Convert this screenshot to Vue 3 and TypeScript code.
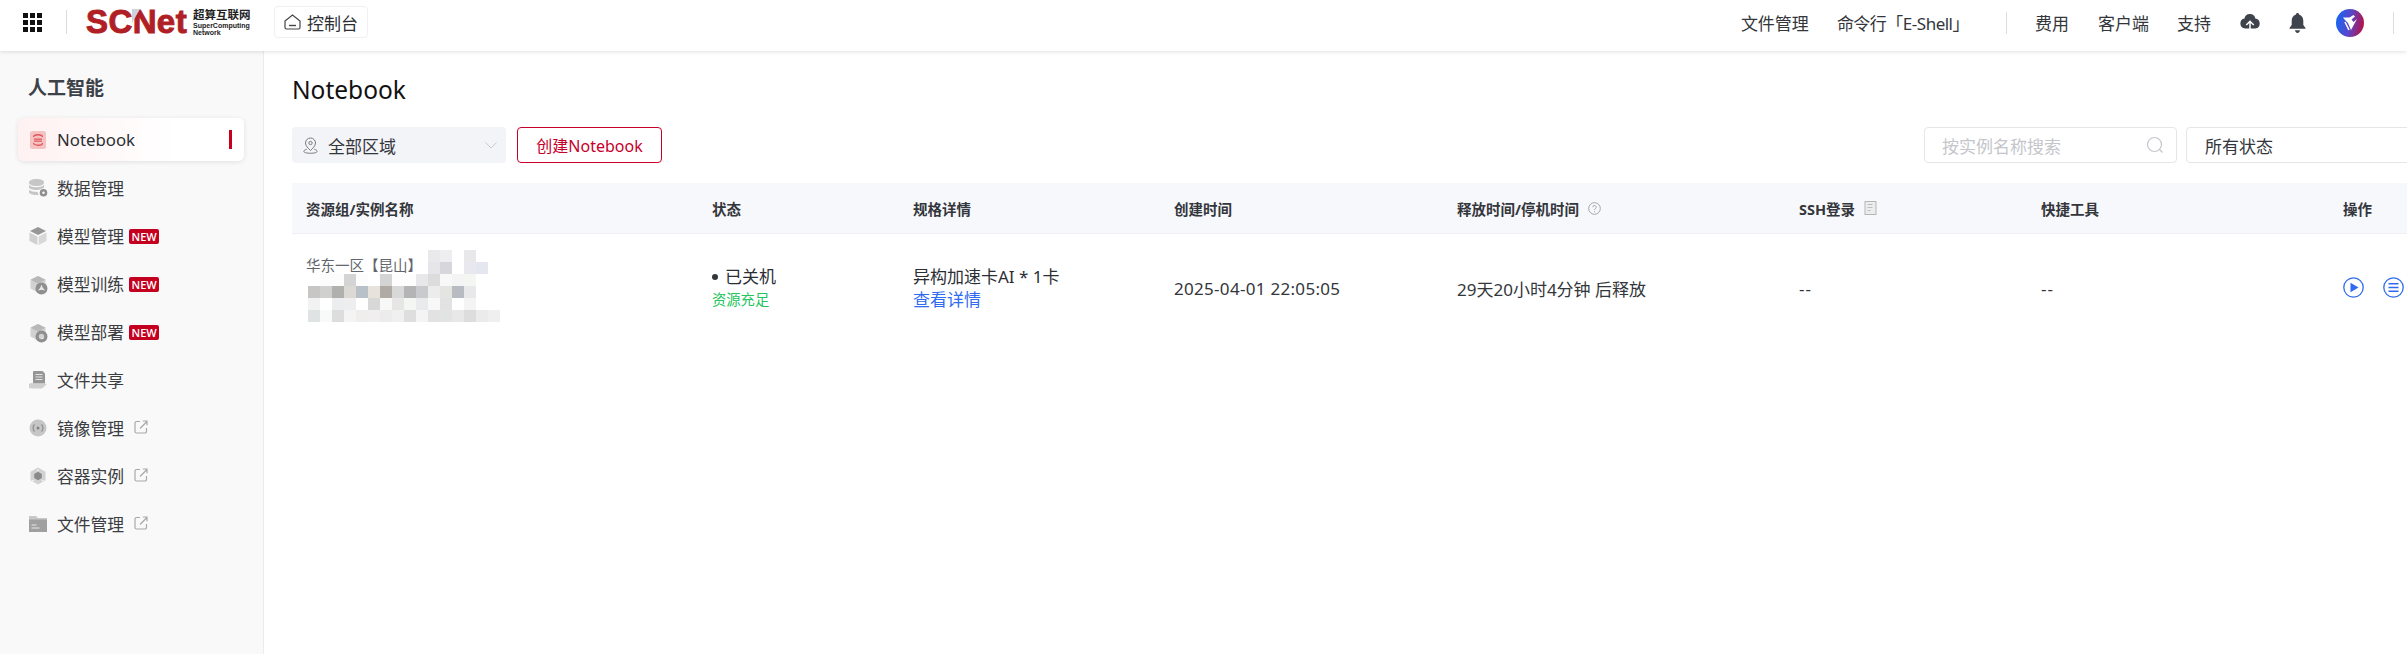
<script setup lang="ts">
interface Shape { d: string; fill?: string; stroke?: string; sw?: number }
interface NavItem { label: string; icon: Shape[]; badge?: boolean; link?: boolean }

const g1 = '#c6c6c6'
const cubeOutline: Shape[] = [
  { d: 'M9 1l7.500 3.800v8.600L9 17.500l-7.500-4V4.800z', fill: '#d2d2d2' },
  { d: 'M1.500 4.800L9 8.500l7.500-3.700L9 1z', fill: '#b8b8b8' },
]
const navItems: NavItem[] = [
  { label: '数据管理', icon: [
    { d: 'M0 3.500C0 1.500 3 0 7.500 0S15 1.500 15 3.500 12 7 7.500 7 0 5.500 0 3.500z', fill: g1 },
    { d: 'M0 5.800C1.500 7.600 4.500 8.300 7.500 8.300S13.500 7.600 15 5.800V8.800c-1 .6-2.500 1-3.700 1.400C9.500 11 8.300 11 7.500 11 3.500 11 0 9.800 0 8.500z', fill: g1 },
    { d: 'M0 10.800C1.500 12.300 4.500 13 8.800 13c.1 1.200.4 2 1 3H7.500C3.500 16 0 14.800 0 13z', fill: g1 },
    { d: 'M14.500 10a3.800 3.800 0 1 0 0 7.600 3.800 3.800 0 0 0 0-7.600zm0 2.500a1.300 1.300 0 1 1 0 2.600 1.300 1.300 0 0 1 0-2.600z', fill: '#8f8f8f' },
  ] },
  { label: '模型管理', badge: true, icon: [
    { d: 'M9 0l8 4-8 4-8-4z', fill: '#979797' },
    { d: 'M.5 5.500l7.900 4V18L.5 14z', fill: '#d0d0d0' },
    { d: 'M17.500 5.500l-7.900 4V18l7.900-4z', fill: '#d8d8d8' },
  ] },
  { label: '模型训练', badge: true, icon: [
    ...cubeOutline,
    { d: 'M12.500 7.500a6 6 0 1 0 0 12 6 6 0 0 0 0-12z', fill: '#8f8f8f' },
    { d: 'M12.500 9.500l1.100 3 2.400 3-3.500-.7-3.500.7 2.400-3z', fill: '#e9e9e9' },
  ] },
  { label: '模型部署', badge: true, icon: [
    ...cubeOutline,
    { d: 'M12.500 7.500a6 6 0 1 0 0 12 6 6 0 0 0 0-12zm0 3.300a2.700 2.700 0 1 1 0 5.400 2.700 2.700 0 0 1 0-5.400z', fill: '#8f8f8f' },
  ] },
  { label: '文件共享', icon: [
    { d: 'M5 0h8.500L16 2.500V12.500H4V1a1 1 0 0 1 1-1z', fill: '#969696' },
    { d: 'M6.500 3.500h7M6.500 6h7M6.500 8.500h7', stroke: '#e3e3e3', sw: 1 },
    { d: 'M0 13c2-1.500 4-1 5.500 0h6.500l4.500-.5c1 0 1.500.8.500 1.500L13 17.500H3.500L0 17z', fill: '#d0d0d0' },
  ] },
  { label: '镜像管理', link: true, icon: [
    { d: 'M9 .500a8.500 8.500 0 1 0 0 17 8.500 8.500 0 0 0 0-17z', fill: '#c6c6c6' },
    { d: 'M5.500 5.500a5 5 0 0 0 0 7M12.500 5.500a5 5 0 0 1 0 7', stroke: '#8f8f8f', sw: 1.200 },
    { d: 'M9 7.500a1.500 1.500 0 1 0 0 3 1.500 1.500 0 0 0 0-3z', fill: '#828282' },
  ] },
  { label: '容器实例', link: true, icon: [
    { d: 'M9 .500l7.500 4.200v8.600L9 17.500l-7.500-4.200V4.700z', fill: '#d2d2d2' },
    { d: 'M9 4.800l3.800 2.200v4L9 13.200 5.200 11V7z', fill: '#8a8a8a' },
    { d: 'M9 2.500v1.500M3.500 14l1.300-1M14.500 14l-1.300-1', stroke: '#f8f8f8', sw: 1.400 },
  ] },
  { label: '文件管理', link: true, icon: [
    { d: 'M0 1h7l2 2h9v2H0z', fill: '#c8c8c8' },
    { d: 'M0 4.500h18V17H0z', fill: '#a0a0a0' },
    { d: 'M2.500 10h5M2.500 13h8', stroke: '#e8e8e8', sw: 1.200 },
  ] },
]

const columns = [
  { label: '资源组/实例名称', width: 406 },
  { label: '状态', width: 201 },
  { label: '规格详情', width: 261 },
  { label: '创建时间', width: 283 },
  { label: '释放时间/停机时间', width: 342, help: true },
  { label: 'SSH登录', width: 242, doc: true },
  { label: '快捷工具', width: 302 },
  { label: '操作', width: 100 },
]
const gridColumns = columns.map((c) => `${c.width}px`).join(' ')

const t = 'transparent'
const redaction: string[][] = [
  [t, t, t, t, t, t, t, t, t, t, '#e9e9eb', '#eeeef0', t, '#e8e8ea', t, t],
  [t, t, t, t, t, t, t, t, t, t, '#e6e6ea', '#d6d6dc', t, '#e8e8ee', '#e4e6f0', t],
  [t, '#fcfcfc', '#fcfcfc', '#d4d4d4', '#fcfcfc', t, '#d4d4d4', '#fcfdfc', '#fcfdfc', '#e8e8ea', '#dcdcdc', '#f8f8f8', '#f4f4f4', '#f4f6f4', t, t],
  ['#c8c6c4', '#d0d0ce', '#b0b0ae', '#dcd8d4', '#b8c0c8', '#e8e2dc', '#b0aaa4', '#d8d8d8', '#b4b4b6', '#c8cace', '#ececec', '#e4e4e0', '#b8bcc2', '#e8e8ea', t, t],
  ['#f2f2f2', '#ffffff', '#ecedef', '#eeeeee', '#ffffff', '#d8d8d8', '#f8f8f6', '#e6e6e6', '#f4f6f4', '#e8eaec', '#f8f8f8', '#e2e2e2', '#ffffff', '#f4f4f4', t, t],
  ['#dfe3e3', '#f8fafa', '#dddddd', '#f4f4f4', '#f0eeec', '#f0eeee', '#ececec', '#f0f0f0', '#dedede', '#f4f4f4', '#e2e2e2', '#e2e4e4', '#e8e8e8', '#dddddd', '#ebebeb', '#efefef'],
]
const redactionCells = redaction.flat()
</script>

<template>
  <div class="page">
    <header class="topbar">
      <div class="top-left">
        <div class="apps"><i v-for="n in 9" :key="n"></i></div>
        <span class="vline"></span>
        <div class="logo">
          <span class="logo-mark">SCNet<i class="fold"></i></span>
          <span class="logo-side">
            <b class="logo-cn">超算互联网</b>
            <b class="logo-en">SuperComputing<br />Network</b>
          </span>
        </div>
        <div class="console">
          <svg width="17" height="16" viewBox="0 0 17 16" fill="none" stroke="#444" stroke-width="1.200">
            <path d="M1 7l7.500-6L16 7v6.500a1.500 1.500 0 0 1-1.500 1.500h-12A1.500 1.500 0 0 1 1 13.500z" />
            <path d="M5 11.500h7" stroke-width="1.400" />
          </svg>
          <span>控制台</span>
        </div>
      </div>
      <nav class="top-right">
        <a class="t1">文件管理</a>
        <a class="t2">命令行「E-Shell」</a>
        <span class="vline v2"></span>
        <a class="t3">费用</a>
        <a class="t4">客户端</a>
        <a class="t5">支持</a>
        <svg class="cloud" width="20" height="18" viewBox="0 0 20 18">
          <path d="M10 0a5.500 5.500 0 0 1 5.300 4.600A5 5 0 0 1 15.500 14.500H5A5 5 0 0 1 4.500 4.600 5.500 5.500 0 0 1 10 0z" fill="#3f434b" />
          <path d="M10 17V8M6.300 11L10 7.300 13.700 11" fill="none" stroke="#fff" stroke-width="1.500" />
        </svg>
        <svg class="bell" width="17" height="20" viewBox="0 0 17 20">
          <path d="M8.500 0c1 0 1.500.7 1.500 1.500C13 2.300 14.300 5 14.300 8v4l2.200 3v.8H.5V15l2.200-3V8C2.700 5 4 2.300 7 1.500 7 .7 7.500 0 8.500 0z" fill="#3f434b" />
          <path d="M6 17.200h5C10.700 19 9.700 20 8.500 20S6.300 19 6 17.200z" fill="#3f434b" />
        </svg>
        <span class="avatar">
          <svg width="28" height="28" viewBox="0 0 28 28">
            <path d="M7 8.500h6.500l4-2.500 1.500 1.500-3.500 3 2 2.500 3.500-3-6 11-3-7L9 11z" fill="#fff" />
            <path d="M9 13l4 8" stroke="#fff" stroke-width="1.600" fill="none" />
          </svg>
        </span>
        <span class="vline v3"></span>
      </nav>
    </header>

    <div class="body">
      <aside class="sidebar">
        <h2 class="side-title">人工智能</h2>
        <div class="nav-item active">
          <svg class="nav-icon" width="18" height="18" viewBox="0 0 18 18">
            <rect x="1" y="0" width="16" height="18" rx="2.500" fill="#f5c2c2" />
            <path d="M4.500 6C5 3 13 3 13.500 6M4.500 12c.5 3 9 3 9 0M5 8.200h8M5 10.200h8" fill="none" stroke="#e0565c" stroke-width="1.300" />
          </svg>
          <span>Notebook</span>
          <i class="active-bar"></i>
        </div>
        <div v-for="item in navItems" :key="item.label" class="nav-item">
          <svg class="nav-icon" width="18" height="18" viewBox="0 0 18 18">
            <path
              v-for="(s, i) in item.icon"
              :key="i"
              :d="s.d"
              :fill="s.fill ?? 'none'"
              :stroke="s.stroke ?? 'none'"
              :stroke-width="s.sw ?? 0"
            />
          </svg>
          <span>{{ item.label }}</span>
          <em v-if="item.badge" class="badge">NEW</em>
          <svg v-if="item.link" class="ext" width="14" height="14" viewBox="0 0 14 14" fill="none" stroke="#a8a8a8" stroke-width="1.200">
            <path d="M6 1.500H2.500a1.500 1.500 0 0 0-1.500 1.500v8.500A1.500 1.500 0 0 0 2.500 13H11a1.500 1.500 0 0 0 1.500-1.500V8" />
            <path d="M6 8.500L13 1.500M8.800 1H13v4.200" />
          </svg>
        </div>
      </aside>

      <main class="main">
        <h1 class="title">Notebook</h1>
        <div class="filters">
          <div class="region">
            <svg width="15" height="17" viewBox="0 0 18 20" fill="none" stroke="#777b82" stroke-width="1.200">
              <path d="M9 1a6 6 0 0 1 6 6c0 3.500-3.500 6.500-6 9-2.500-2.500-6-5.500-6-9a6 6 0 0 1 6-6z" />
              <circle cx="9" cy="7" r="2" />
              <path d="M4.500 14.500C2.500 15 1 16 1 17c0 1.500 3.500 2.300 8 2.300s8-.8 8-2.300c0-1-1.500-2-3.500-2.500" />
            </svg>
            <span>全部区域</span>
            <svg class="chev" width="12" height="7" viewBox="0 0 12 7" fill="none" stroke="#c6cad1" stroke-width="1">
              <path d="M.5 .5L6 6l5.500-5.500" />
            </svg>
          </div>
          <button class="create" type="button">创建Notebook</button>
          <div class="spacer"></div>
          <div class="search">
            <span>按实例名称搜索</span>
            <svg width="18" height="18" viewBox="0 0 18 18" fill="none" stroke="#c4c6cb" stroke-width="1.200">
              <circle cx="8.500" cy="8.500" r="7" />
              <path d="M13.500 13.500L16.500 16.500" />
            </svg>
          </div>
          <div class="status-select">所有状态</div>
        </div>

        <div class="table">
          <div class="thead" :style="{ gridTemplateColumns: gridColumns }">
            <div v-for="c in columns" :key="c.label" class="th">
              <span>{{ c.label }}</span>
              <svg v-if="c.help" width="13" height="13" viewBox="0 0 13 13" fill="none" stroke="#a5a5a5">
                <circle cx="6.500" cy="6.500" r="5.800" />
                <path d="M4.800 5.200a1.700 1.700 0 1 1 2.500 1.500c-.6.300-.8.600-.8 1.300M6.500 9.200v1" />
              </svg>
              <svg v-if="c.doc" width="13" height="14" viewBox="0 0 13 14">
                <rect x="1" y="0.500" width="11" height="13" fill="#ededed" stroke="#b5b5b5" />
                <path d="M3.500 3.500h5M3.500 6.500h5M3.500 9.500h3" stroke="#bdbdbd" fill="none" />
              </svg>
            </div>
          </div>
          <div class="trow" :style="{ gridTemplateColumns: gridColumns }">
            <div class="td name-cell">
              <span class="zone">华东一区【昆山】</span>
              <div class="redact">
                <i v-for="(c, i) in redactionCells" :key="i" :style="{ background: c }"></i>
              </div>
            </div>
            <div class="td stack">
              <span class="state"><i class="dot"></i>已关机</span>
              <span class="avail">资源充足</span>
            </div>
            <div class="td stack">
              <span class="state">异构加速卡AI * 1卡</span>
              <a class="detail">查看详情</a>
            </div>
            <div class="td date">2025-04-01 22:05:05</div>
            <div class="td">29天20小时4分钟 后释放</div>
            <div class="td dash">--</div>
            <div class="td dash">--</div>
            <div class="td actions">
              <svg width="21" height="21" viewBox="0 0 21 21" fill="none" stroke="#2f6bf0" stroke-width="1.300">
                <circle cx="10.500" cy="10.500" r="9.700" />
                <path d="M7.500 5.800l8 4.700-8 4.700z" fill="#2f6bf0" stroke="none" />
              </svg>
              <svg width="21" height="21" viewBox="0 0 21 21" fill="none" stroke="#2f6bf0" stroke-width="1.300">
                <circle cx="10.500" cy="10.500" r="9.700" />
                <path d="M5.500 6.700h10M5.500 10.500h10M5.500 14.300h10" stroke-width="1.600" />
              </svg>
            </div>
          </div>
        </div>
      </main>
    </div>
  </div>
</template>

<style>
html, body { margin: 0; background: #fff; overflow: hidden; }
</style>

<style scoped>
.page {
  width: 2407px;
  height: 654px;
  overflow: hidden;
  display: flex;
  flex-direction: column;
  font-family: "Noto Sans", "Noto Sans CJK SC", sans-serif;
  color: #2b2e33;
  font-size: 16px;
}
.topbar {
  height: 51px;
  flex: none;
  display: flex;
  justify-content: space-between;
  align-items: center;
  background: #fff;
  box-shadow: 0 1px 4px rgba(0, 0, 0, .12);
  position: relative;
  z-index: 2;
}
.top-left, .top-right { display: flex; align-items: center; }
.top-left { padding-left: 23px; padding-bottom: 7px; }
.apps {
  display: grid;
  grid-template-columns: repeat(3, 5px);
  grid-auto-rows: 5px;
  gap: 2px;
}
.apps i { background: #111; }
.vline { width: 1px; height: 24px; background: #dcdcdc; display: block; }
.top-left .vline { margin-left: 24px; }
.logo { display: flex; align-items: center; margin-left: 19px; width: 188px; }
.logo-mark {
  position: relative;
  font-family: "Liberation Sans", sans-serif;
  font-weight: 700;
  font-size: 33px;
  line-height: 30px;
  letter-spacing: .4px;
  color: #b01f26;
  -webkit-text-stroke: 1px #b01f26;
}
.fold {
  position: absolute;
  left: 46px;
  top: 2px;
  width: 0;
  height: 0;
  border-left: 8px solid #cfd2da;
  border-bottom: 14px solid transparent;
}
.logo-side { display: flex; flex-direction: column; margin-left: 6px; color: #222; }
.logo-cn { font-size: 11.500px; line-height: 14px; font-weight: 700; white-space: nowrap; }
.logo-en { font-size: 7px; line-height: 7px; font-family: "Liberation Sans", sans-serif; white-space: nowrap; }
.console {
  width: 94px;
  height: 32px;
  box-sizing: border-box;
  border: 1px solid #eef0f2;
  border-radius: 4px;
  display: flex;
  align-items: center;
  justify-content: center;
  gap: 6px;
  font-size: 17px;
  color: #2b2e33;
}
.top-right { font-size: 17px; color: #33363b; padding-right: 13px; padding-bottom: 6px; box-sizing: border-box; height: 100%; }
.t1 { margin-right: 28px; white-space: nowrap; }
.t2 { margin-right: 37px; white-space: nowrap; letter-spacing: -.5px; }
.v2 { height: 22px; margin-right: 28px; }
.t3 { margin-right: 29px; }
.t4 { margin-right: 28px; }
.t5 { margin-right: 29px; }
.bell { margin-left: 29px; }
.avatar {
  margin-left: 30px;
  width: 28px;
  height: 28px;
  border-radius: 50%;
  background: linear-gradient(100deg, #1c63ee 10%, #5b46c8 50%, #b0154e 90%);
  display: block;
}
.avatar svg { display: block; }
.v3 { height: 22px; margin-left: 29px; }

.body { flex: 1; display: flex; min-height: 0; }
.sidebar {
  flex: none;
  background: #f9f9f9;
  border-right: 1px solid #ececec;
  padding: 23px 19px 0 18px;
  box-sizing: content-box;
  width: 226px;
}
.side-title {
  margin: 0 0 16px 10px;
  font-size: 19px;
  line-height: 28px;
  font-weight: 700;
  color: #3d4148;
}
.nav-item {
  height: 48px;
  display: flex;
  align-items: center;
  padding-left: 11px;
  font-size: 16.800px;
  color: #3b3d42;
  white-space: nowrap;
}
.nav-item > span { margin-left: 10px; }
.nav-item.active {
  height: 43px;
  margin-bottom: 3px;
  border-radius: 6px;
  background: linear-gradient(90deg, #fff1f1, #fff 70%);
  box-shadow: 0 1px 5px rgba(0, 0, 0, .1);
  position: relative;
  color: #2b2e33;
}
.nav-icon { flex: none; display: block; overflow: visible; }
.active-bar {
  position: absolute;
  left: 211px;
  top: 12px;
  width: 3px;
  height: 19px;
  background: #c8001e;
}
.badge {
  margin-left: 5px;
  width: 30px;
  height: 15px;
  border-radius: 2px;
  background: #c4001f;
  color: #fff;
  font-style: normal;
  font-size: 11px;
  line-height: 15px;
  text-align: center;
  font-family: "Open Sans", sans-serif;
  font-weight: 600;
}
.ext { margin-left: 10px; margin-top: -2px; }

.main { flex: 1; min-width: 0; padding: 0 0 0 28px; overflow: hidden; }
.title {
  margin: 24px 0 0;
  font-size: 24.500px;
  line-height: 30px;
  font-weight: 400;
  color: #111;
}
.filters { display: flex; align-items: stretch; height: 36px; margin-top: 22px; width: 2144px; }
.region {
  width: 214px;
  box-sizing: border-box;
  background: #f3f4f8;
  border-radius: 4px;
  display: flex;
  align-items: center;
  padding-left: 11px;
  font-size: 17px;
  color: #33363b;
}
.region span { margin-left: 10px; }
.chev { margin-left: auto; margin-right: 9px; }
.create {
  width: 145px;
  margin-left: 11px;
  border: 1px solid #c6002b;
  border-radius: 4px;
  background: #fff;
  color: #c6002b;
  font: inherit;
  font-size: 16px;
  padding: 0;
}
.spacer { flex: 1; }
.search, .status-select {
  box-sizing: border-box;
  border: 1px solid #e4e6ea;
  border-radius: 4px;
  display: flex;
  align-items: center;
  font-size: 17px;
}
.search {
  width: 253px;
  justify-content: space-between;
  padding: 0 12px 0 17px;
  color: #c4c6cb;
}
.status-select { width: 250px; margin-left: 9px; padding-left: 18px; color: #33363b; }

.table { width: 2200px; margin-top: 20px; }
.thead {
  display: grid;
  height: 51px;
  box-sizing: border-box;
  background: #f7f8fc;
  border-bottom: 1px solid #eef0f3;
  padding-left: 14px;
}
.th {
  display: flex;
  align-items: center;
  gap: 9px;
  font-size: 14.500px;
  font-weight: 700;
  color: #33363b;
  white-space: nowrap;
}
.trow { display: grid; height: 108px; padding-left: 14px; }
.td {
  display: flex;
  align-items: center;
  font-size: 17px;
  color: #33363b;
  white-space: nowrap;
  box-sizing: border-box;
}
.date { letter-spacing: .3px; }
.name-cell { position: relative; align-items: flex-start; padding-top: 21px; }
.zone { font-size: 14.500px; line-height: 20px; color: #62656b; }
.redact {
  position: absolute;
  left: 2px;
  top: 16px;
  display: grid;
  grid-template-columns: repeat(16, 12px);
  grid-auto-rows: 12px;
}
.redact i { display: block; }
.stack { flex-direction: column; align-items: flex-start; justify-content: flex-start; padding-top: 33px; }
.state { line-height: 20px; color: #2b2e33; display: flex; align-items: center; }
.dot { width: 6px; height: 6px; border-radius: 50%; background: #33363b; margin-right: 7px; }
.avail { font-size: 14.300px; line-height: 20px; margin-top: 3px; color: #22c55e; }
.detail { font-size: 17px; line-height: 20px; margin-top: 3px; color: #2f6bf0; }
.dash { letter-spacing: 1px; }
.actions { gap: 19px; padding-bottom: 2px; }
.actions svg { display: block; }
</style>
